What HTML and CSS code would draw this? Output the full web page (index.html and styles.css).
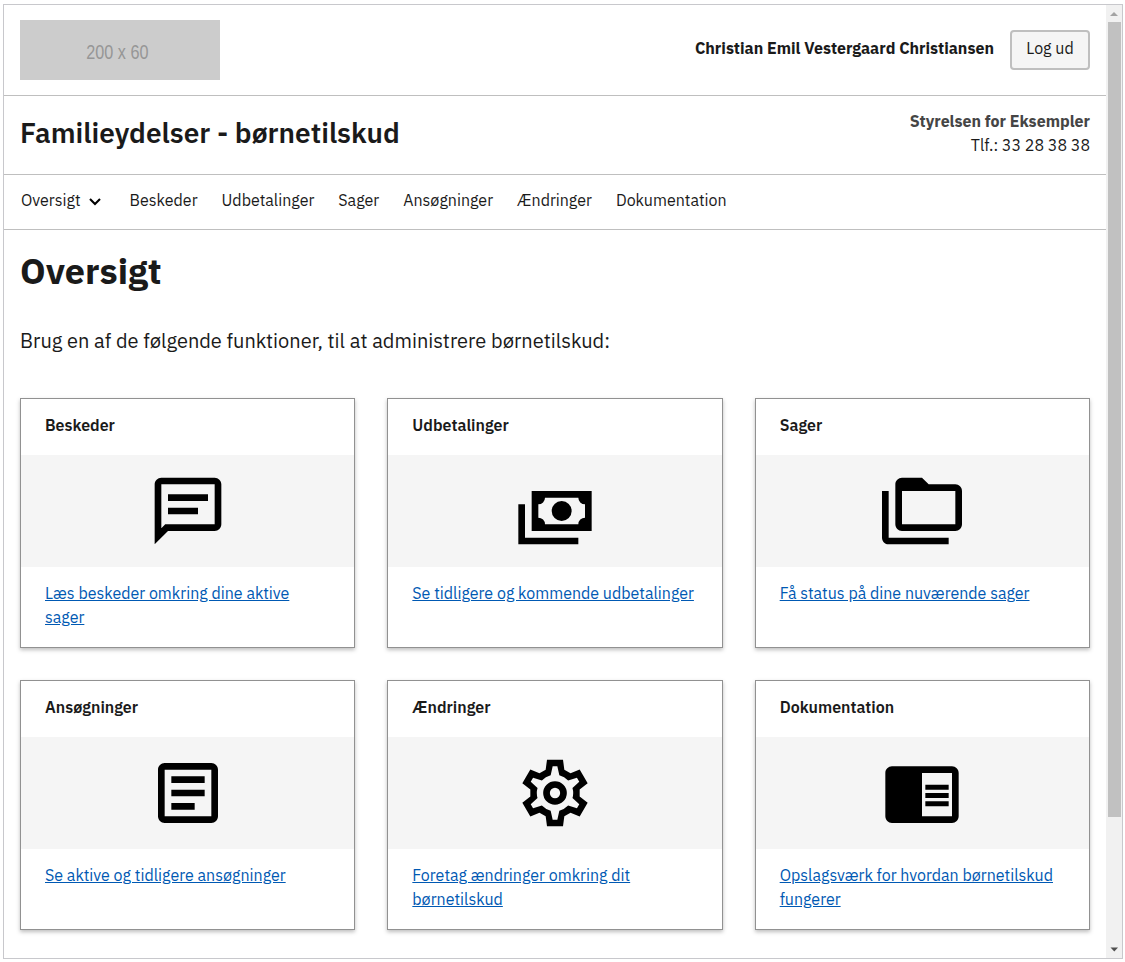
FILE: index.html
```html
<!DOCTYPE html>
<html lang="da">
<head>
<meta charset="utf-8">
<title>Oversigt</title>
<link rel="stylesheet" href="styles.css">
</head>
<body>
<div class="frame">
  <div class="page">
    <header>
      <div class="portal">
        <div class="logo"><span>200 x 60</span></div>
        <div class="user">
          <span class="user-name">Christian Emil Vestergaard Christiansen</span>
          <button class="logout" type="button">Log ud</button>
        </div>
      </div>
      <div class="solution">
        <div class="solution-title">Familieydelser - børnetilskud</div>
        <div class="authority">
          <div class="authority-name">Styrelsen for Eksempler</div>
          <div>Tlf.: 33 28 38 38</div>
        </div>
      </div>
      <nav class="nav">
        <a class="nav-link nav-current">Oversigt
          <svg class="chevron" viewBox="0 0 12 8"><path d="M1 1.1 6 6.1l5-5" fill="none" stroke="#000" stroke-width="2.1"/></svg>
        </a>
        <a class="nav-link">Beskeder</a>
        <a class="nav-link">Udbetalinger</a>
        <a class="nav-link">Sager</a>
        <a class="nav-link">Ansøgninger</a>
        <a class="nav-link">Ændringer</a>
        <a class="nav-link">Dokumentation</a>
      </nav>
    </header>
    <main class="main">
      <h1 class="heading">Oversigt</h1>
      <p class="lead">Brug en af de følgende funktioner, til at administrere børnetilskud:</p>
      <div class="cards">
        <section class="card">
          <h2 class="card-title">Beskeder</h2>
          <div class="card-icon"><svg viewBox="0 0 24 24"><path fill-rule="evenodd" d="M20 2H4c-1.1 0-2 .9-2 2v18l4-4h14c1.1 0 2-.9 2-2V4c0-1.1-.9-2-2-2zm0 14H5.17L4 17.17V4h16v12zM6 7h12v2H6zM6 11h9v2H6z"/></svg></div>
          <div class="card-body"><a class="link">Læs beskeder omkring dine aktive sager</a></div>
        </section>
        <section class="card">
          <h2 class="card-title">Udbetalinger</h2>
          <div class="card-icon"><svg viewBox="0 0 24 24"><path fill-rule="evenodd" d="M5 6h18v12H5zM9 8a2 2 0 0 1-2 2v4a2 2 0 0 1 2 2h10a2 2 0 0 1 2-2v-4a2 2 0 0 1-2-2z"/><circle cx="14" cy="12" r="3"/><path d="M1 10h2v10h16v2H1z"/></svg></div>
          <div class="card-body"><a class="link">Se tidligere og kommende udbetalinger</a></div>
        </section>
        <section class="card">
          <h2 class="card-title">Sager</h2>
          <div class="card-icon"><svg viewBox="0 0 24 24"><path fill-rule="evenodd" d="M22 4h-8l-2-2H6c-1.1 0-2 .9-2 2v12c0 1.1.9 2 2 2h16c1.1 0 2-.9 2-2V6c0-1.1-.9-2-2-2zM6 6h16v10H6z"/><path d="M0 6h2v14h18v2H2c-1.1 0-2-.9-2-2z"/></svg></div>
          <div class="card-body"><a class="link">Få status på dine nuværende sager</a></div>
        </section>
        <section class="card">
          <h2 class="card-title">Ansøgninger</h2>
          <div class="card-icon"><svg viewBox="0 0 24 24"><path fill-rule="evenodd" d="M5 3h14c1.1 0 2 .9 2 2v14c0 1.1-.9 2-2 2H5c-1.1 0-2-.9-2-2V5c0-1.1.9-2 2-2zm0 2v14h14V5zM7 7h10v2H7zM7 11h10v2H7zM7 15h7v2H7z"/></svg></div>
          <div class="card-body"><a class="link">Se aktive og tidligere ansøgninger</a></div>
        </section>
        <section class="card">
          <h2 class="card-title">Ændringer</h2>
          <div class="card-icon"><svg viewBox="-12 -12 24 24"><path fill-rule="evenodd" d="M-2.4-10H2.4L2.8-7 4.66-5.92 7.4-7.05 9.8-2.9 7.4-1.08V1.08L9.8 2.9 7.4 7.05 4.66 5.92 2.8 7 2.4 10H-2.4L-2.8 7-4.66 5.92-7.4 7.05-9.8 2.9-7.4 1.08V-1.08L-9.8-2.9-7.4-7.05-4.66-5.92-2.8-7zM-.7-8-1.3-5.3A5.45 5.45 0 0 0-3.94-3.78L-6.58-4.61-7.28-3.39-5.24-1.52A5.45 5.45 0 0 0-5.24 1.52L-7.28 3.39-6.58 4.61-3.94 3.78A5.45 5.45 0 0 0-1.3 5.3L-.7 8H.7L1.3 5.3A5.45 5.45 0 0 0 3.94 3.78L6.58 4.61 7.28 3.39 5.24 1.52A5.45 5.45 0 0 0 5.24-1.52L7.28-3.39 6.58-4.61 3.94-3.78A5.45 5.45 0 0 0 1.3-5.3L.7-8z"/><circle r="2.55" fill="none" stroke="#000" stroke-width="2"/></svg></div>
          <div class="card-body"><a class="link">Foretag ændringer omkring dit børnetilskud</a></div>
        </section>
        <section class="card">
          <h2 class="card-title">Dokumentation</h2>
          <div class="card-icon"><svg viewBox="0 0 24 24"><path fill-rule="evenodd" d="M3 4h18c1.1 0 2 .9 2 2v13c0 1.1-.9 2-2 2H3c-1.1 0-2-.9-2-2V6c0-1.1.9-2 2-2zm9 2v13h9V6zM13 9.5h7V11h-7zM13 12h7v1.5h-7zM13 14.5h7V16h-7z"/></svg></div>
          <div class="card-body"><a class="link">Opslagsværk for hvordan børnetilskud fungerer</a></div>
        </section>
      </div>
    </main>
  </div>
  <div class="scrollbar">
    <svg class="arrow" viewBox="0 0 16 17"><path d="M4 11h8L8 7z" fill="#a3a3a3"/></svg>
    <div class="thumb"></div>
    <svg class="arrow" viewBox="0 0 16 17"><path d="M4.500 6.500h7.500L8.250 10.500z" fill="#505050"/></svg>
  </div>
</div>
</body>
</html>
```
FILE: styles.css
```css
* { box-sizing: border-box; }

body {
  margin: 0;
  height: 962px;
  padding: 4px 2px 3px 3px;
  background: #fff;
  color: #1a1a1a;
  font: 16px/24px "IBM Plex Sans", "Open Sans", sans-serif;
  overflow: hidden;
}

.frame {
  display: flex;
  width: 1120px;
  height: 955px;
  border: 1px solid #c8c8cc;
}

.page { flex: 1; overflow: hidden; }

.portal, .solution {
  display: flex;
  justify-content: space-between;
  padding: 0 16px;
  border-bottom: 1px solid #bfbfbf;
}
.portal { height: 91px; align-items: center; }
.solution { height: 79px; }

.logo {
  display: flex;
  align-items: center;
  justify-content: center;
  width: 200px;
  height: 60px;
  padding: 4px 5px 0 0;
  background: #ccc;
  color: #969696;
  font: 20px "Liberation Sans", sans-serif;
}
.logo span { flex: none; transform: scaleX(.81); }

.user { display: flex; align-items: center; gap: 16px; }
.user-name { font-weight: 700; padding-bottom: 4px; }
.logout {
  width: 80px;
  height: 40px;
  padding: 0 0 4px;
  border: 2px solid #bfbfbf;
  border-radius: 4px;
  background: #f5f5f5;
  color: #1a1a1a;
  font: inherit;
}

.solution-title { padding-top: 19px; font-size: 28px; line-height: 36px; font-weight: 600; }
.authority { padding-top: 13px; text-align: right; }
.authority-name { color: #454545; font-weight: 700; }

.nav {
  display: flex;
  align-items: flex-start;
  gap: 24px;
  height: 55px;
  padding: 13px 17px 0;
  border-bottom: 1px solid #bfbfbf;
}
.nav-link { white-space: nowrap; }
.nav-current { display: flex; align-items: center; gap: 8px; width: 84.6px; }
.chevron { width: 12px; height: 8px; margin-top: 3px; }

.main { padding: 0 16px; }
.heading {
  margin: 17px 0 0;
  font-size: 36px;
  line-height: 48px;
  font-weight: 700;
}
.lead { margin: 30px 0 0; font-size: 20px; line-height: 32px; }

.cards {
  display: grid;
  grid-template-columns: repeat(3, 1fr);
  gap: 32px;
  margin-top: 41px;
}
.card {
  height: 250px;
  border: 1px solid #919191;
  background: #fff;
  box-shadow: 0 2px 4px rgba(0, 0, 0, .26);
}
.card-title {
  height: 56px;
  margin: 0;
  padding: 14px 24px 0;
  font-size: 16px;
  line-height: 24px;
  font-weight: 600;
}
.card-icon { height: 112px; padding: 16px; background: #f5f5f5; text-align: center; }
.card-icon svg { display: block; width: 80px; height: 80px; margin: 0 auto; }
.card-body { padding: 14px 24px 0; }
.link {
  color: #0059b3;
  text-decoration: underline;
}

.scrollbar { display: flex; flex-direction: column; width: 16px; background: #f1f1f1; }
.arrow { width: 16px; height: 17px; flex: none; }
.thumb { width: 13px; height: 795px; margin: 0 auto auto 2px; background: #c1c1c1; }
```
